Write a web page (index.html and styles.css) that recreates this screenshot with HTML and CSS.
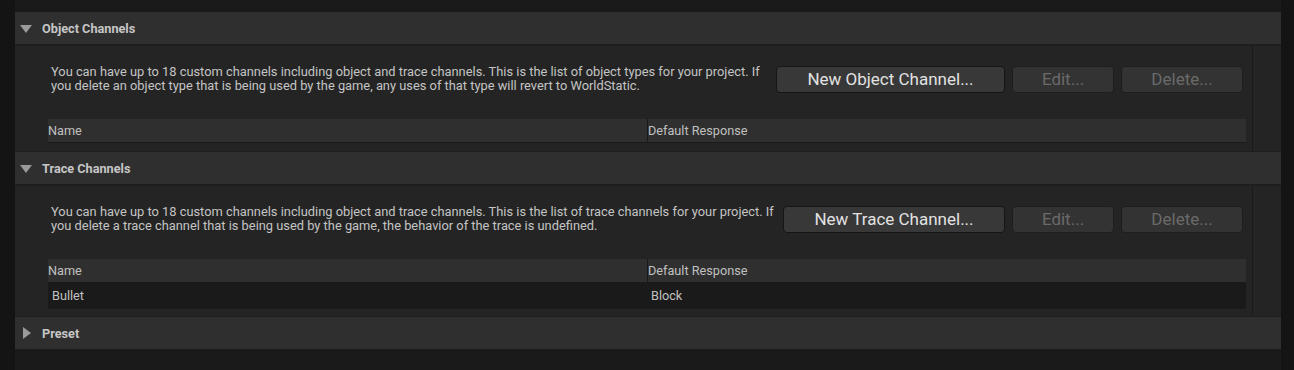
FILE: index.html
```html
<!DOCTYPE html>
<html>
<head>
<meta charset="utf-8">
<link rel="stylesheet" href="styles.css">
</head>
<body>
<div class="main">
  <div class="category">
    <div class="cat-header"><span class="arrow down"></span><span class="cat-title">Object Channels</span></div>
    <div class="cat-body">
      <div class="cat-inner pad-8">
        <div class="top-row">
          <p class="desc">You can have up to 18 custom channels including object and trace channels. This is the list of object types for your project. If you delete an object type that is being used by the game, any uses of that type will revert to WorldStatic.</p>
          <div class="buttons">
            <button class="btn btn-new btn-obj">New Object Channel...</button>
            <button class="btn btn-edit" disabled>Edit...</button>
            <button class="btn btn-del" disabled>Delete...</button>
          </div>
        </div>
        <div class="table">
          <div class="thead"><div class="cell">Name</div><div class="cell">Default Response</div></div>
        </div>
      </div>
      <div class="side"></div>
    </div>
  </div>
  <div class="category">
    <div class="cat-header"><span class="arrow down"></span><span class="cat-title">Trace Channels</span></div>
    <div class="cat-body">
      <div class="cat-inner pad-7">
        <div class="top-row">
          <p class="desc">You can have up to 18 custom channels including object and trace channels. This is the list of trace channels for your project. If you delete a trace channel that is being used by the game, the behavior of the trace is undefined.</p>
          <div class="buttons">
            <button class="btn btn-new btn-trace">New Trace Channel...</button>
            <button class="btn btn-edit" disabled>Edit...</button>
            <button class="btn btn-del" disabled>Delete...</button>
          </div>
        </div>
        <div class="table">
          <div class="thead"><div class="cell">Name</div><div class="cell">Default Response</div></div>
          <div class="trow"><div class="cell">Bullet</div><div class="cell">Block</div></div>
        </div>
      </div>
      <div class="side"></div>
    </div>
  </div>
  <div class="category">
    <div class="cat-header last"><span class="arrow right"></span><span class="cat-title">Preset</span></div>
  </div>
</div>
</body>
</html>
```

FILE: styles.css
```css
* { box-sizing: border-box; }
html, body { margin: 0; padding: 0; }
body {
  background: #141414;
  font-family: Roboto, "Liberation Sans", sans-serif;
  color: #c0c0c0;
  width: 1294px;
  height: 370px;
  overflow: hidden;
}
.main {
  margin: 0 13px 0 15px;
  background: #1a1a1a;
  padding-top: 12px;
  height: 370px;
}
.cat-header {
  height: 34px;
  background: #2f2f2f;
  border-bottom: 2px solid #1e1e1e;
  display: flex;
  align-items: center;
  padding-left: 5px;
}
.cat-header.last { height: 32px; border-bottom: 0; }
.arrow { display: inline-block; width: 0; height: 0; }
.arrow.down {
  border-left: 6.5px solid transparent;
  border-right: 6.5px solid transparent;
  border-top: 8px solid #9a9a9a;
  margin-right: 10px;
  margin-top: 1px;
}
.arrow.right {
  border-top: 6.5px solid transparent;
  border-bottom: 6.5px solid transparent;
  border-left: 8px solid #9a9a9a;
  margin-left: 3px;
  margin-right: 11px;
}
.cat-title {
  font-weight: bold;
  font-size: 12.7px;
  color: #c6c6c6;
}
.cat-body {
  display: flex;
  background: #242424;
  border-bottom: 1px solid #1e1e1e;
}
.cat-inner {
  flex: 1;
  padding: 20px 6px 8px 33px;
  border-right: 1px solid #1a1a1a;
}
.cat-inner.pad-7 { padding-bottom: 7px; }
.side { width: 28px; }
.top-row {
  display: flex;
  align-items: center;
  padding: 0 3px;
  height: 27px;
}
.desc {
  margin: 0 0 1px;
  flex: 1;
  font-size: 12.85px;
  line-height: 14.5px;
  color: #c4c4c4;
  padding-right: 8px;
}
.buttons { display: flex; gap: 7px; }
.btn {
  font-family: Roboto, "Liberation Sans", sans-serif;
  height: 27px;
  font-size: 17px;
  border: 1px solid #151515;
  border-radius: 4px;
  background: #383838;
  color: #e2e2e2;
  padding: 0 0 1px;
  margin: 0;
}
.btn-obj { width: 229px; }
.btn-trace { width: 222px; }
.btn[disabled] { background: #333333; color: #6a6a6a; border-color: #1e1e1e; }
.btn-edit { width: 102px; }
.btn-del { width: 122px; }
.table { margin-top: 26px; }
.thead, .trow { display: grid; grid-template-columns: 599px 1fr; }
.thead {
  height: 24px;
  background: #2f2f2f;
  border-bottom: 1px solid #1a1a1a;
  font-size: 12.7px;
}
.thead .cell { line-height: 23px; }
.thead .cell + .cell { border-left: 1px solid #1a1a1a; }
.trow {
  height: 27px;
  background: #1a1a1a;
  font-size: 12.7px;
  margin-top: -1px;
}
.trow .cell { line-height: 28px; padding-left: 4px; }
```
